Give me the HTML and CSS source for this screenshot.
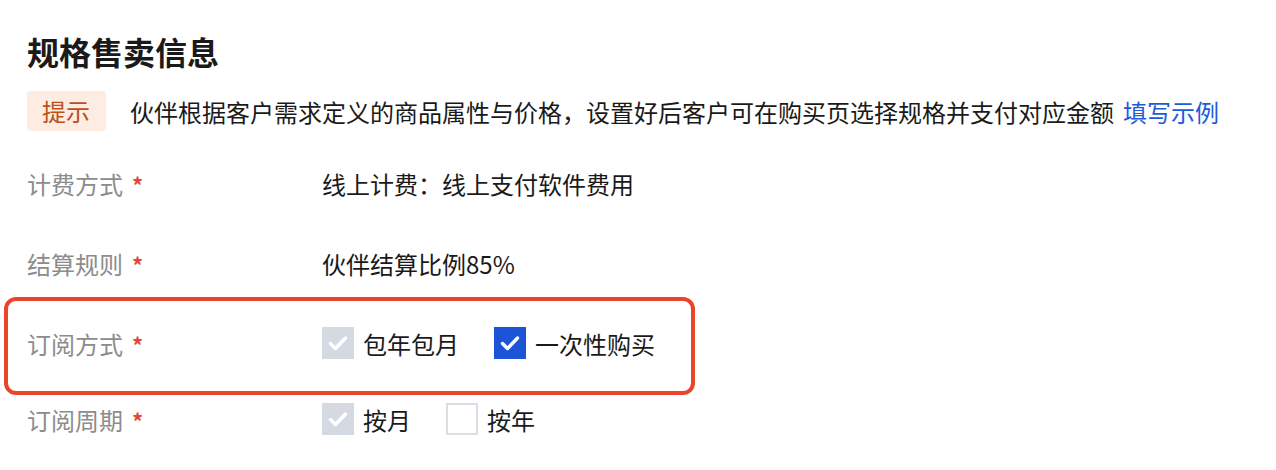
FILE: index.html
```html
<!DOCTYPE html>
<html lang="zh-CN">
<head>
  <meta charset="UTF-8">
  <title>规格售卖信息</title>
  <link rel="stylesheet" href="styles.css">
</head>
<body>

<div class="page">
  <h2 class="section-title">规格售卖信息</h2>

  <div class="tip">
    <span class="tip-tag">提示</span>
    <span class="tip-text">伙伴根据客户需求定义的商品属性与价格，设置好后客户可在购买页选择规格并支付对应金额</span>
    <a class="tip-link" href="#">填写示例</a>
  </div>

  <div class="form">
    <div class="form-row">
      <div class="form-label">计费方式<span class="required">*</span></div>
      <div class="form-value">线上计费：线上支付软件费用</div>
    </div>

    <div class="form-row">
      <div class="form-label">结算规则<span class="required">*</span></div>
      <div class="form-value">伙伴结算比例85%</div>
    </div>

    <div class="form-row">
      <div class="form-label">订阅方式<span class="required">*</span></div>
      <div class="form-value">
        <label class="checkbox">
          <span class="box disabled">
            <svg viewBox="0 0 32 32"><polyline points="8.5,16.5 13.5,21.5 23.5,11"/></svg>
          </span>
          包年包月
        </label>
        <label class="checkbox">
          <span class="box checked">
            <svg viewBox="0 0 32 32"><polyline points="8.5,16.5 13.5,21.5 23.5,11"/></svg>
          </span>
          一次性购买
        </label>
      </div>
    </div>

    <div class="form-row last">
      <div class="form-label">订阅周期<span class="required">*</span></div>
      <div class="form-value">
        <label class="checkbox">
          <span class="box disabled">
            <svg viewBox="0 0 32 32"><polyline points="8.5,16.5 13.5,21.5 23.5,11"/></svg>
          </span>
          按月
        </label>
        <label class="checkbox">
          <span class="box"></span>
          按年
        </label>
      </div>
    </div>
  </div>

  <!-- annotation around 订阅方式 -->
  <div class="highlight"></div>
</div>

</body>
</html>
```

FILE: styles.css
```css
body {
  margin: 0;
  background: #ffffff;
  font-family: "Noto Sans CJK SC", "Noto Sans", sans-serif;
  color: #1f1f1f;
}

.page {
  position: relative;
  padding: 31px 0 0 27px;
  height: 439px;
}

.section-title {
  margin: 0;
  font-size: 32px;
  line-height: 40px;
  font-weight: bold;
  color: #1a1a1a;
}

/* Tip line */
.tip {
  display: flex;
  align-items: center;
  margin-top: 20px;
  height: 40px;
  font-size: 24px;
}

.tip-tag {
  background: #fcece1;
  color: #bd4f1a;
  padding: 0 16px 0 15px;
  line-height: 40px;
  border-radius: 4px;
}

.tip-text {
  margin-left: 24px;
  color: #1a1a1a;
}

.tip-link {
  margin-left: 9px;
  color: #1c5bd9;
  text-decoration: none;
}

/* Form rows */
.form {
  margin-top: 12px;
}

.form-row {
  display: flex;
  align-items: center;
  height: 80px;
  font-size: 24px;
}

.form-row.last {
  height: 72px;
}

.form-label {
  width: 295px;
  color: #8c8c8c;
}

.required {
  color: #e4473a;
  font-size: 22px;
  font-weight: bold;
  margin-left: 9px;
}

.form-value {
  display: flex;
  align-items: center;
  color: #1a1a1a;
}

/* Checkboxes */
.checkbox {
  display: flex;
  align-items: center;
  gap: 9px;
  margin-right: 35px;
}

.box {
  width: 32px;
  height: 32px;
  box-sizing: border-box;
  border: 2px solid #dadee5;
  background: #ffffff;
}

.box svg {
  display: block;
  width: 32px;
  height: 32px;
  margin: -2px;
  fill: none;
  stroke: #ffffff;
  stroke-width: 3.4;
  stroke-linecap: round;
  stroke-linejoin: round;
}

.box.disabled {
  border-color: #d5dae2;
  background: #d5dae2;
}

.box.checked {
  border-color: #1c54d6;
  background: #1c54d6;
}

/* Red annotation frame */
.highlight {
  position: absolute;
  left: 4px;
  top: 297px;
  width: 683px;
  height: 90px;
  border: 4px solid #ec4429;
  border-radius: 12px;
}
```
